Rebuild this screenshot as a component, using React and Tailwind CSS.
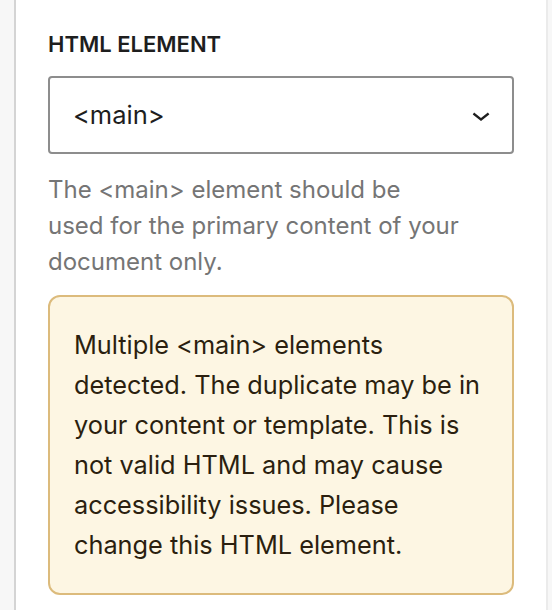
export default function App() {
  return (
    <div className="flex h-[610px] w-full bg-white" style={{ fontFamily: 'Inter, "Noto Sans", sans-serif' }}>
      <div className="w-[14px] shrink-0 border-r-2 border-[#d4d4d4] bg-[#f7f7f7] box-content" />
      <div className="flex-1 px-[32px] pt-[30px]">
        <label className="block text-[22px] leading-[28px] font-semibold uppercase text-[#1e1e1e]">HTML element</label>
        <div className="mt-[18px] flex h-[78px] items-center justify-between rounded-[4px] border-2 border-[#8d8d8d] pl-[23px] pr-[13px]">
          <span className="text-[25.5px] text-[#1e1e1e]">&lt;main&gt;</span>
          <svg viewBox="0 0 24 24" className="h-[36px] w-[36px] fill-[#1e1e1e]">
            <path d="M17.5 11.6L12 16l-5.5-4.4.9-1.2L12 14l4.6-3.6 1 1.2z" />
          </svg>
        </div>
        <p className="mt-[18px] text-[24px] leading-[36px] text-[#757575]">
          The &lt;main&gt; element should be
          <br />
          used for the primary content of your
          <br />
          document only.
        </p>
        <div className="mt-[15px] whitespace-nowrap rounded-[12px] border-2 border-[#dcbb7c] bg-[#fdf6e3] px-[24px] pt-[28px] pb-[28px] text-[25.3px] leading-[40px] text-[#2b1f0f]">
          Multiple &lt;main&gt; elements
          <br />
          detected. The duplicate may be in
          <br />
          your content or template. This is
          <br />
          not valid HTML and may cause
          <br />
          accessibility issues. Please
          <br />
          change this HTML element.
        </div>
      </div>
      <div className="w-[4px] shrink-0 border-l-2 border-[#ebebeb] bg-[#f7f7f7] box-content" />
    </div>
  )
}
